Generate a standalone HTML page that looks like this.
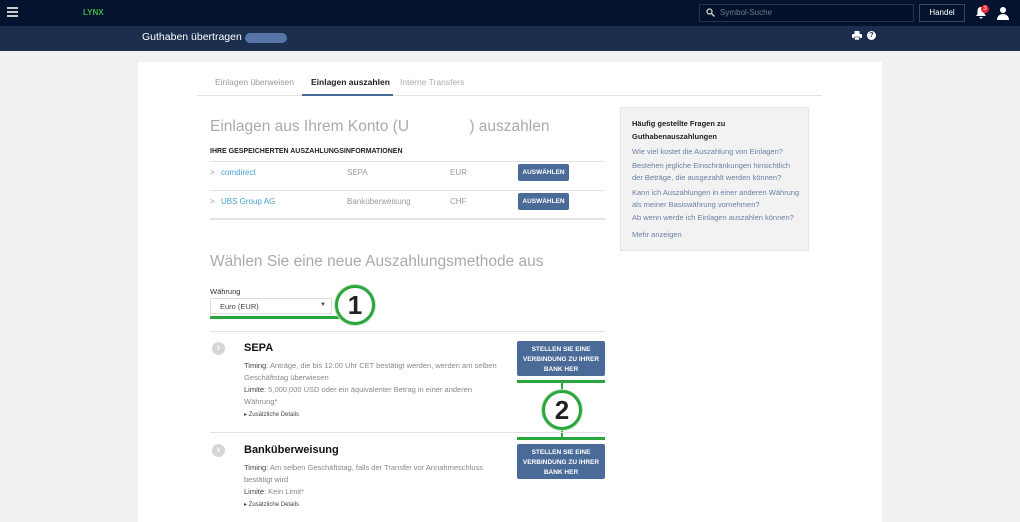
<!DOCTYPE html>
<html><head><meta charset="utf-8"><style>
*{margin:0;padding:0;box-sizing:border-box}
body{width:1020px;height:517px;overflow:hidden;background:#f1f1f1;font-family:"Liberation Sans",sans-serif;position:relative;color:#333}
.a{position:absolute}
.top{left:0;top:0;width:1020px;height:26px;background:#04142f}
.sub{left:0;top:26px;width:1020px;height:25px;background:#1c2e4d}
.panel{left:138px;top:62px;width:744px;height:460px;background:#fff}
.t{position:absolute;white-space:nowrap}
.btn{position:absolute;background:#4a6a98;color:#fff;font-weight:bold;font-size:6.5px;text-align:center;border-radius:2px}
.hr{position:absolute;height:1px;background:#e3e3e3}
.g{position:absolute;background:#2aa63c}
.circ{position:absolute;width:40px;height:40px;border-radius:50%;border:3px solid #2aa63c;background:#fff;box-shadow:0 0 0 1px #bfe3c4;font:bold 26px "Liberation Sans",sans-serif;color:#222;text-align:center;line-height:34px}
.faq{color:#6a7fa3;font-size:7.5px}
.ci{position:absolute;width:13px;height:13px;border-radius:50%;background:#d6d6d6;color:#fff;font-size:11px;text-align:center;line-height:12px;font-weight:bold}
</style></head><body>
<div class="a top"></div>
<div class="a sub"></div>
<div class="t" style="left:7px;top:7px;width:11px;height:2px;background:#ccc;box-shadow:0 4px 0 #ccc,0 8px 0 #ccc"></div>
<div class="t" style="left:83px;top:8px;color:#3cb54a;font-size:8px;font-weight:bold">LYNX</div>
<div class="t" style="left:699px;top:4px;width:215px;height:18px;border:1px solid #223355;background:#03112a"></div>
<svg class="a" style="left:706px;top:8px" width="9" height="9" viewBox="0 0 9 9"><circle cx="3.5" cy="3.5" r="2.5" fill="none" stroke="#ccc" stroke-width="1.3"/><path d="M5.5 5.5L8.5 8.5" stroke="#ccc" stroke-width="1.5"/></svg>
<div class="t" style="left:720px;top:8px;color:#6d7a90;font-size:8px">Symbol-Suche</div>
<div class="t" style="left:919px;top:4px;width:46px;height:18px;border:1px solid #445;color:#fff;font-size:8px;text-align:center;line-height:16px">Handel</div>
<svg class="a" style="left:975px;top:6px" width="12" height="14" viewBox="0 0 12 14"><path d="M6 1C3.5 1 2.5 3 2.5 5v3L1 10h10L9.5 8V5C9.5 3 8.5 1 6 1z M4.5 11a1.5 1.5 0 0 0 3 0z" fill="#fff"/></svg>
<div class="t" style="left:981px;top:5px;width:8px;height:8px;border-radius:50%;background:#e23;color:#fff;font-size:6px;text-align:center;line-height:8px">3</div>
<svg class="a" style="left:997px;top:6px" width="12" height="14" viewBox="0 0 12 14"><circle cx="6" cy="4" r="3" fill="#fff"/><path d="M0 14c0-4 3-6 6-6s6 2 6 6z" fill="#fff"/></svg>
<div class="t" style="left:142px;top:31px;color:#fff;font-size:10.5px">Guthaben übertragen</div>
<div class="t" style="left:245px;top:33px;width:42px;height:10px;border-radius:5px;background:#5676a7"></div>
<svg class="a" style="left:852px;top:31px" width="10" height="9" viewBox="0 0 10 9"><rect x="2.5" y="0" width="5" height="3" fill="#fff"/><rect x="0" y="3" width="10" height="4" rx="1" fill="#fff"/><rect x="2.5" y="6" width="5" height="3" fill="#fff" stroke="#1c2e4d" stroke-width=".6"/></svg>
<div class="t" style="left:867px;top:31px;width:9px;height:9px;border-radius:50%;background:#fff;color:#1c2e4d;font-size:7px;font-weight:bold;text-align:center;line-height:9px">?</div>
<div class="a panel"></div>
<div class="t" style="left:215px;top:77px;font-size:8.5px;color:#999">Einlagen überweisen</div>
<div class="t" style="left:311px;top:77px;font-size:8.5px;color:#222;font-weight:bold">Einlagen auszahlen</div>
<div class="t" style="left:400px;top:77px;font-size:8.5px;color:#aaa">Interne Transfers</div>
<div class="hr" style="left:197px;top:95px;width:625px"></div>
<div class="t" style="left:302px;top:94px;width:91px;height:2px;background:#4a6a98"></div>
<div class="t" style="left:210px;top:118px;font-size:15.5px;color:#aaa">Einlagen aus Ihrem Konto (U&nbsp;&nbsp;&nbsp;&nbsp;&nbsp;&nbsp;&nbsp;&nbsp;&nbsp;&nbsp;&nbsp;&nbsp;&nbsp;&nbsp;) auszahlen</div>
<div class="t" style="left:210px;top:148px;font-size:7px;font-weight:bold;color:#222">IHRE GESPEICHERTEN AUSZAHLUNGSINFORMATIONEN</div>
<div class="hr" style="left:210px;top:161px;width:395px"></div>
<div class="t" style="left:210px;top:168px;font-size:8px;color:#999">&gt;</div>
<div class="t" style="left:221px;top:168px;font-size:8px;color:#4aa0d5">comdirect</div>
<div class="t" style="left:347px;top:168px;font-size:8px;color:#999">SEPA</div>
<div class="t" style="left:450px;top:168px;font-size:8px;color:#999">EUR</div>
<div class="btn" style="left:518px;top:164px;width:51px;height:17px;line-height:17px">AUSWÄHLEN</div>
<div class="hr" style="left:210px;top:190px;width:395px"></div>
<div class="t" style="left:210px;top:197px;font-size:8px;color:#999">&gt;</div>
<div class="t" style="left:221px;top:197px;font-size:8px;color:#4aa0d5">UBS Group AG</div>
<div class="t" style="left:347px;top:197px;font-size:8px;color:#999">Banküberweisung</div>
<div class="t" style="left:450px;top:197px;font-size:8px;color:#999">CHF</div>
<div class="btn" style="left:518px;top:193px;width:51px;height:17px;line-height:17px">AUSWÄHLEN</div>
<div class="hr" style="left:210px;top:218px;width:395px;height:2px"></div>
<div class="t" style="left:210px;top:253px;font-size:15.5px;color:#aaa">Wählen Sie eine neue Auszahlungsmethode aus</div>
<div class="t" style="left:210px;top:287px;font-size:7.5px;color:#333">Währung</div>
<div class="t" style="left:210px;top:298px;width:122px;height:16px;border:1px solid #ddd;font-size:7.5px;color:#444;padding:3px 9px">Euro (EUR)<span style="position:absolute;right:5px;top:3px;font-size:6px">▼</span></div>
<div class="g" style="left:210px;top:316px;width:130px;height:3px"></div>
<div class="circ" style="left:335px;top:285px">1</div>
<div class="hr" style="left:210px;top:331px;width:395px"></div>
<div class="ci" style="left:212px;top:342px">›</div>
<div class="t" style="left:244px;top:342px;font-size:11px;font-weight:bold;color:#111">SEPA</div>
<div class="t" style="left:244px;top:360px;font-size:7.5px;line-height:12px;color:#888"><span style="color:#444">Timing</span>: Anträge, die bis 12:00 Uhr CET bestätigt werden, werden am selben<br>Geschäftstag überwiesen<br><span style="color:#444">Limite</span>: 5,000,000 USD oder ein äquivalenter Betrag in einer anderen<br>Währung*</div>
<div class="t" style="left:244px;top:411px;font-size:6px;color:#444">▸ Zusätzliche Details</div>
<div class="btn" style="left:517px;top:341px;width:88px;height:35px;line-height:10px;padding-top:4px">STELLEN SIE EINE<br>VERBINDUNG ZU IHRER<br>BANK HER</div>
<div class="g" style="left:517px;top:380px;width:88px;height:3px"></div>
<div class="g" style="left:561px;top:383px;width:2px;height:55px"></div>
<div class="hr" style="left:210px;top:432px;width:395px"></div>
<div class="g" style="left:517px;top:437px;width:88px;height:3px"></div>
<div class="circ" style="left:542px;top:390px">2</div>
<div class="ci" style="left:212px;top:444px">›</div>
<div class="t" style="left:244px;top:444px;font-size:11px;font-weight:bold;color:#111">Banküberweisung</div>
<div class="t" style="left:244px;top:462px;font-size:7.5px;line-height:12px;color:#888"><span style="color:#444">Timing</span>: Am selben Geschäftstag, falls der Transfer vor Annahmeschluss<br>bestätigt wird<br><span style="color:#444">Limite</span>: Kein Limit*</div>
<div class="t" style="left:244px;top:501px;font-size:6px;color:#444">▸ Zusätzliche Details</div>
<div class="btn" style="left:517px;top:444px;width:88px;height:35px;line-height:10px;padding-top:4px">STELLEN SIE EINE<br>VERBINDUNG ZU IHRER<br>BANK HER</div>
<div class="t" style="left:620px;top:107px;width:189px;height:144px;background:#f2f2f2;border:1px solid #e6e6e6"></div>
<div class="t" style="left:632px;top:117px;font-size:7.5px;line-height:13px;color:#222;font-weight:bold">Häufig gestellte Fragen zu<br>Guthabenauszahlungen</div>
<div class="t faq" style="left:632px;top:145px;line-height:13px">Wie viel kostet die Auszahlung von Einlagen?</div>
<div class="t faq" style="left:632px;top:160px;line-height:12px">Bestehen jegliche Einschränkungen hinsichtlich<br>der Beträge, die ausgezahlt werden können?</div>
<div class="t faq" style="left:632px;top:187px;line-height:12px">Kann ich Auszahlungen in einer anderen Währung<br>als meiner Basiswährung vornehmen?</div>
<div class="t faq" style="left:632px;top:213px">Ab wenn werde ich Einlagen auszahlen können?</div>
<div class="t faq" style="left:632px;top:230px">Mehr anzeigen</div>
</body></html>
